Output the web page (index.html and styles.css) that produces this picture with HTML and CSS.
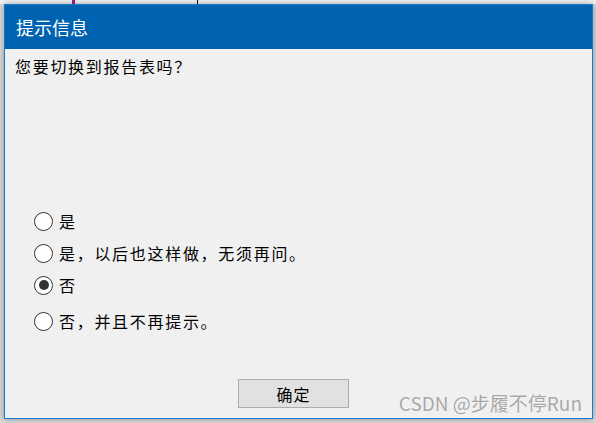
FILE: index.html
```html
<!DOCTYPE html>
<html lang="zh-CN">
<head>
    <meta charset="UTF-8">
    <title>提示信息</title>
    <link rel="stylesheet" href="styles.css">
</head>
<body>
    <div class="backdrop-strip">
        <span class="strip-mark"></span>
        <span class="strip-line"></span>
    </div>
    <div class="dialog">
        <div class="title-bar">提示信息</div>
        <div class="dialog-body">
            <p class="question">您要切换到报告表吗？</p>
            <div class="options">
                <label class="option"><span class="radio"></span>是</label>
                <label class="option"><span class="radio"></span>是，以后也这样做，无须再问。</label>
                <label class="option"><span class="radio checked"></span>否</label>
                <label class="option last"><span class="radio"></span>否，并且不再提示。</label>
            </div>
            <div class="footer">
                <button class="ok-button">确定</button>
            </div>
            <div class="watermark">CSDN @步履不停Run</div>
        </div>
    </div>
</body>
</html>
```

FILE: styles.css
```css
body {
    margin: 0;
    width: 596px;
    height: 423px;
    overflow: hidden;
    background: #d9d9d9;
    font-family: "Noto Sans CJK SC", "Noto Sans", sans-serif;
    position: relative;
}
.backdrop-strip {
    position: absolute;
    top: 0;
    left: 0;
    width: 596px;
    height: 4px;
    background: #f2f2f2;
}
.strip-mark {
    position: absolute;
    left: 72px;
    top: 0;
    width: 3px;
    height: 4px;
    background: #a0208a;
}
.strip-line {
    position: absolute;
    left: 197px;
    top: 0;
    width: 1px;
    height: 4px;
    background: #000;
}
.dialog {
    position: absolute;
    left: 4px;
    top: 4px;
    width: 587px;
    height: 413px;
    border: 1px solid #1979ca;
    background: #f0f0f0;
    display: flex;
    flex-direction: column;
    box-shadow: 0 0 6px rgba(0, 0, 0, 0.35);
}
.title-bar {
    height: 44px;
    background: #0063b1;
    color: #ffffff;
    font-size: 18px;
    line-height: 44px;
    padding-left: 11px;
    flex-shrink: 0;
}
.dialog-body {
    flex: 1;
    display: flex;
    flex-direction: column;
    position: relative;
    padding: 7px 10px 0 10px;
}
.question {
    margin: 0;
    font-size: 16px;
    line-height: 20px;
    color: #000;
    letter-spacing: 1.7px;
}
.options {
    margin-top: 129px;
    padding-left: 19px;
    display: flex;
    flex-direction: column;
}
.option {
    display: flex;
    align-items: center;
    height: 32px;
    font-size: 16px;
    color: #000;
    letter-spacing: 1.7px;
}
.option.last {
    margin-top: 4px;
}
.radio {
    width: 17px;
    height: 17px;
    border: 1.5px solid #333;
    border-radius: 50%;
    background: #fff;
    margin-right: 6px;
    display: flex;
    align-items: center;
    justify-content: center;
    flex-shrink: 0;
}
.radio.checked::after {
    content: "";
    width: 10px;
    height: 10px;
    border-radius: 50%;
    background: #333;
}
.footer {
    margin-top: auto;
    height: 39px;
    display: flex;
    justify-content: center;
    align-items: flex-start;
    padding-right: 10px;
}
.ok-button {
    width: 111px;
    height: 29px;
    border: 1px solid #adadad;
    background: #e1e1e1;
    font-family: "Noto Sans CJK SC", sans-serif;
    font-size: 16px;
    color: #000;
    padding: 0;
    letter-spacing: 1px;
}
.watermark {
    position: absolute;
    right: 10px;
    bottom: 2px;
    font-family: "Noto Sans CJK SC", "Noto Sans", sans-serif;
    font-size: 19px;
    color: #a8a8a8;
    text-shadow: 0 0 1px #fff;
}
```
